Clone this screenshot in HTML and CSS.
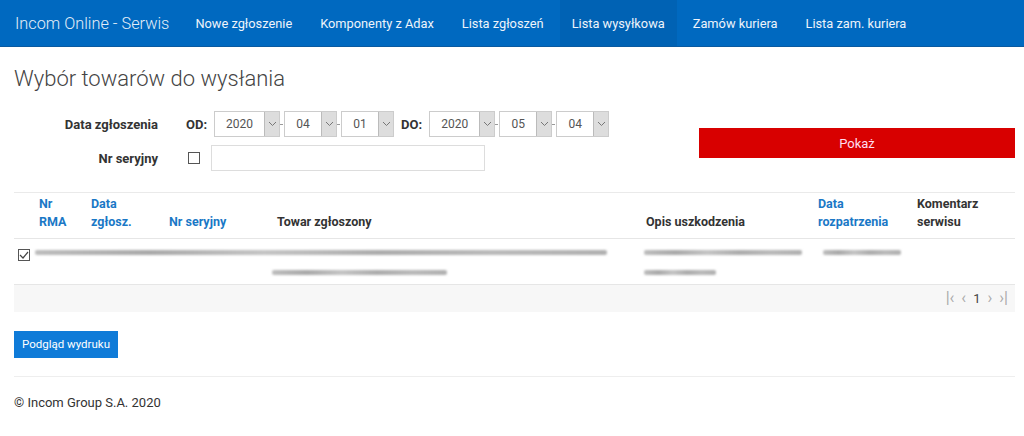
FILE: index.html
```html
<!DOCTYPE html>
<html lang="pl">
<head>
  <meta charset="UTF-8">
  <title>Incom Online - Serwis</title>
  <link rel="stylesheet" href="styles.css">
</head>
<body>
  <nav class="navbar">
    <a class="brand" href="#">Incom Online - Serwis</a>
    <ul class="nav">
      <li><a href="#">Nowe zgłoszenie</a></li>
      <li><a href="#">Komponenty z Adax</a></li>
      <li><a href="#">Lista zgłoszeń</a></li>
      <li class="active"><a href="#">Lista wysyłkowa</a></li>
      <li><a href="#">Zamów kuriera</a></li>
      <li><a href="#">Lista zam. kuriera</a></li>
    </ul>
  </nav>

  <div class="container">
    <h1>Wybór towarów do wysłania</h1>

    <div class="filters">
      <div class="filter-fields">
        <div class="form-row">
          <label>Data zgłoszenia</label>
          <span class="range">OD:</span>
          <div class="sel sel-year"><span class="val">2020</span><span class="arr"><svg width="9" height="6" viewBox="0 0 9 6"><path d="M1 1l3.5 3.5L8 1" fill="none" stroke="#777" stroke-width="1"/></svg></span></div>
          <span class="dash"></span>
          <div class="sel"><span class="val">04</span><span class="arr"><svg width="9" height="6" viewBox="0 0 9 6"><path d="M1 1l3.5 3.5L8 1" fill="none" stroke="#777" stroke-width="1"/></svg></span></div>
          <span class="dash"></span>
          <div class="sel"><span class="val">01</span><span class="arr"><svg width="9" height="6" viewBox="0 0 9 6"><path d="M1 1l3.5 3.5L8 1" fill="none" stroke="#777" stroke-width="1"/></svg></span></div>
          <span class="range range-to">DO:</span>
          <div class="sel sel-year"><span class="val">2020</span><span class="arr"><svg width="9" height="6" viewBox="0 0 9 6"><path d="M1 1l3.5 3.5L8 1" fill="none" stroke="#777" stroke-width="1"/></svg></span></div>
          <span class="dash"></span>
          <div class="sel"><span class="val">05</span><span class="arr"><svg width="9" height="6" viewBox="0 0 9 6"><path d="M1 1l3.5 3.5L8 1" fill="none" stroke="#777" stroke-width="1"/></svg></span></div>
          <span class="dash"></span>
          <div class="sel"><span class="val">04</span><span class="arr"><svg width="9" height="6" viewBox="0 0 9 6"><path d="M1 1l3.5 3.5L8 1" fill="none" stroke="#777" stroke-width="1"/></svg></span></div>
        </div>
        <div class="form-row">
          <label>Nr seryjny</label>
          <span class="check"></span>
          <input type="text" class="text-input">
        </div>
      </div>
      <button class="btn-show">Pokaż</button>
    </div>

    <table class="grid">
      <colgroup>
        <col style="width:21px"><col style="width:52px"><col style="width:78px"><col style="width:108px">
        <col style="width:369px"><col style="width:172px"><col style="width:99px"><col>
      </colgroup>
      <thead>
        <tr>
          <th></th>
          <th class="link">Nr<br>RMA</th>
          <th class="link">Data<br>zgłosz.</th>
          <th class="link">Nr seryjny</th>
          <th>Towar zgłoszony</th>
          <th>Opis uszkodzenia</th>
          <th class="link">Data<br>rozpatrzenia</th>
          <th>Komentarz<br>serwisu</th>
        </tr>
      </thead>
      <tbody>
        <tr>
          <td class="check-cell"><span class="check checked"><svg width="10" height="8" viewBox="0 0 10 8"><path d="M1 4l3 3 5-6" fill="none" stroke="#444" stroke-width="1.2"/></svg></span></td>
          <td colspan="4" class="blur-cell blur-first">
            <span class="blur" style="width:572px"></span>
            <span class="blur blur-2" style="width:175px"></span>
          </td>
          <td class="blur-cell">
            <span class="blur" style="width:158px; margin-left:-2px"></span>
            <span class="blur" style="width:72px; margin-left:-2px"></span>
          </td>
          <td class="blur-cell"><span class="blur" style="width:78px; margin-left:5px"></span></td>
          <td></td>
        </tr>
      </tbody>
      <tfoot>
        <tr>
          <td colspan="8">
            <div class="pager">
              <span>|&lsaquo;</span><span>&lsaquo;</span><span class="page">1</span><span>&rsaquo;</span><span>&rsaquo;|</span>
            </div>
          </td>
        </tr>
      </tfoot>
    </table>

    <button class="btn-print">Podgląd wydruku</button>

    <footer class="footer">© Incom Group S.A. 2020</footer>
  </div>
</body>
</html>
```

FILE: styles.css
```css
body {
  margin: 0;
  font-family: Roboto, "Liberation Sans", sans-serif;
  color: #333;
  background: #fff;
}

.navbar {
  display: flex;
  align-items: stretch;
  height: 46px;
  background: #0069c0;
  border-bottom: 1px solid #0a5aa0;
}

.brand {
  display: flex;
  align-items: center;
  padding: 0 12px 0 15px;
  font-size: 16.3px;
  font-weight: 300;
  color: #e4eef8;
  text-decoration: none;
}

.nav {
  display: flex;
  margin: 0;
  padding: 0;
  list-style: none;
}

.nav li a {
  display: flex;
  align-items: center;
  height: 100%;
  padding: 0 14px;
  font-size: 12.8px;
  color: #eef4fb;
  text-decoration: none;
}

.nav li.active a {
  background: #0062b4;
  padding: 0 12px;
  margin: 0 2px;
}

.container {
  padding: 0 9px 0 14px;
}

h1 {
  margin: 19px 0 20px;
  font-size: 22px;
  font-weight: 300;
  color: #444;
}

.filters {
  display: flex;
  align-items: center;
}

.filter-fields {
  display: flex;
  flex-direction: column;
  gap: 8px;
}

.form-row {
  display: flex;
  align-items: center;
  height: 26px;
}

.form-row label {
  width: 144px;
  margin-right: 28px;
  text-align: right;
  font-size: 13px;
  font-weight: 700;
  color: #333;
}

.range {
  font-size: 13px;
  font-weight: 700;
  margin-right: 7px;
}

.range-to {
  margin-left: 7px;
}

.sel {
  display: flex;
  width: 53px;
  height: 26px;
  box-sizing: border-box;
  border: 1px solid #ccc;
  background: #fff;
}

.sel-year {
  width: 66px;
}

.sel .val {
  flex: 1;
  display: flex;
  align-items: center;
  justify-content: center;
  font-size: 12px;
  color: #555;
}

.sel .arr {
  width: 14px;
  display: flex;
  align-items: center;
  justify-content: center;
  background: #ddd;
  border-left: 1px solid #bbb;
}

.dash {
  width: 3px;
  height: 1px;
  margin: 0 1px 0 0;
  background: #999;
}

.check {
  display: inline-flex;
  align-items: center;
  justify-content: center;
  width: 12px;
  height: 12px;
  box-sizing: border-box;
  border: 1px solid #555;
  background: #fff;
  margin: 0 11px 0 2px;
}

.text-input {
  width: 274px;
  height: 26px;
  box-sizing: border-box;
  border: 1px solid #ddd;
  padding: 0 6px;
  font: inherit;
}

.btn-show {
  margin: 4px 0 0 auto;
  width: 316px;
  height: 30px;
  border: none;
  background: #d80000;
  color: #fde;
  font-family: inherit;
  font-size: 13px;
}

.grid {
  width: 1001px;
  margin-top: 21px;
  border-collapse: collapse;
  table-layout: fixed;
  font-size: 12.5px;
}

.grid thead tr {
  height: 46px;
  border-top: 1px solid #eaeaea;
  border-bottom: 1px solid #e6e6e6;
}

.grid th {
  padding: 0 4px 7px;
  text-align: left;
  vertical-align: bottom;
  font-weight: 700;
  line-height: 18px;
  color: #333;
}

.grid th.link {
  color: #1a78c6;
}

.grid tbody tr {
  height: 46px;
  border-bottom: 1px solid #e6e6e6;
}

.grid td {
  padding: 0 4px;
  vertical-align: top;
}

.grid td.check-cell {
  padding: 8px 0 0 4px;
}

.grid tbody .check {
  margin: 0;
}

.grid td.blur-cell {
  padding-top: 11px;
}

.grid td.blur-first {
  padding-left: 0;
}

.blur {
  display: block;
  height: 5px;
  margin: 0 0 15px 0;
  background: linear-gradient(90deg, #bdbdbd, #a9a9a9 20%, #c4c4c4 40%, #acacac 60%, #bababa 80%, #b0b0b0);
  border-radius: 2px;
  filter: blur(1.3px);
}

.blur:last-child {
  margin-bottom: 0;
}

.blur-2 {
  margin-left: 237px;
}

.grid tfoot tr {
  height: 27px;
}

.grid tfoot td {
  padding: 0 7px;
  background: #f7f7f7;
  vertical-align: middle;
}

.pager {
  display: flex;
  justify-content: flex-end;
  align-items: center;
  gap: 7px;
  color: #aaa;
  font-size: 16px;
  line-height: 1;
}

.pager .page {
  color: #444;
  font-size: 13px;
}

.btn-print {
  margin-top: 19px;
  padding: 0 8px;
  height: 27px;
  border: none;
  background: #0f7bd8;
  color: #fff;
  font-family: inherit;
  font-size: 11.5px;
}

.footer {
  margin-top: 18px;
  padding-top: 18px;
  border-top: 1px solid #eee;
  font-size: 13px;
  color: #333;
}
```
